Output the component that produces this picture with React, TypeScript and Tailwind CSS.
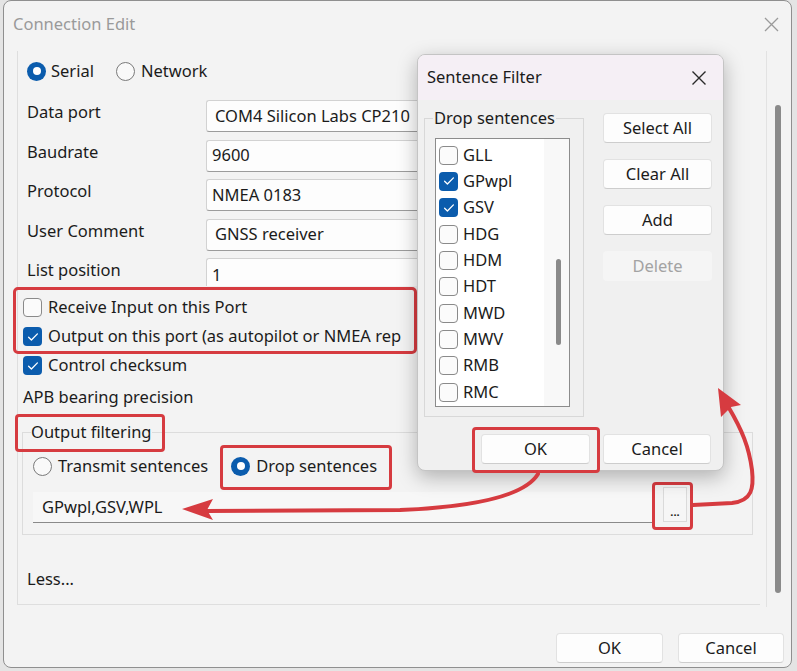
import React from "react";

const font = "font-['Noto_Sans',sans-serif]";

function Check({ on }: { on?: boolean }) {
  if (on) {
    return (
      <span className="flex h-[19px] w-[19px] shrink-0 items-center justify-center rounded-[4px] bg-[#0b5cad]">
        <svg width="12" height="10" viewBox="0 0 12 10">
          <path d="M1.6 5.3 4.4 8 10.4 1.9" fill="none" stroke="white" strokeWidth="1.3" strokeLinecap="round" strokeLinejoin="round" />
        </svg>
      </span>
    );
  }
  return <span className="h-[19px] w-[19px] shrink-0 rounded-[4px] border border-[#8a8a8a] bg-[#fbfbfb]" />;
}

function Radio({ on, className = "" }: { on?: boolean; className?: string }) {
  if (on) {
    return (
      <span className={`flex h-[19px] w-[19px] shrink-0 items-center justify-center rounded-full bg-[#0b5cad] ${className}`}>
        <span className="h-[8px] w-[8px] rounded-full bg-white" />
      </span>
    );
  }
  return <span className={`block h-[19px] w-[19px] shrink-0 rounded-full border border-[#7a7a7a] bg-[#f9f9f9] ${className}`} />;
}

function Btn({ children, disabled, className = "" }: { children: React.ReactNode; disabled?: boolean; className?: string }) {
  return (
    <div
      className={
        "flex h-[30px] items-center justify-center rounded-[4px] text-[16.5px] " +
        (disabled
          ? "bg-[#f5f5f5] text-[#a3a3a3]"
          : "border border-[#e2e2e2] border-b-[#cdcdcd] bg-[#fdfdfd] text-[#1b1b1b]") +
        " " +
        className
      }
    >
      {children}
    </div>
  );
}

const fields = [
  { label: "Data port", value: "COM4 Silicon Labs CP210", pad: "pl-[8px]" },
  { label: "Baudrate", value: "9600", pad: "pl-[5px]" },
  { label: "Protocol", value: "NMEA 0183", pad: "pl-[5px]" },
  { label: "User Comment", value: "GNSS receiver", pad: "pl-[8px]" },
];

const sentences = [
  { name: "GLL", on: false },
  { name: "GPwpl", on: true },
  { name: "GSV", on: true },
  { name: "HDG", on: false },
  { name: "HDM", on: false },
  { name: "HDT", on: false },
  { name: "MWD", on: false },
  { name: "MWV", on: false },
  { name: "RMB", on: false },
  { name: "RMC", on: false },
];

function SentenceFilter() {
  return (
    <div className="absolute left-[417px] top-[54px] flex h-[417px] w-[307px] flex-col overflow-hidden rounded-[8px] border border-[#c4c4c4] bg-[#f0f0f0] shadow-[0_6px_20px_rgba(0,0,0,0.28)]">
      <div className="flex h-[45px] shrink-0 items-center justify-between bg-[#f5eff5] pl-[9px] pr-[16px]">
        <span className="text-[16.5px] text-[#1b1b1b]">Sentence Filter</span>
        <svg width="16" height="16" viewBox="0 0 16 16">
          <path d="M1.5 1.5 14.5 14.5M14.5 1.5 1.5 14.5" stroke="#2a2a2a" strokeWidth="1.4" />
        </svg>
      </div>
      <div className="flex items-start pl-[6px]">
        <fieldset className="mt-[6px] w-[159px] border border-[#d8d8d8] pb-[9px] pl-[10px] pr-[13px]">
          <legend className="ml-[-2px] px-[1px] leading-[24px] text-[16.5px] text-[#1b1b1b]">Drop sentences</legend>
          <div className="mt-[8px] flex h-[269px] w-[135px] border border-[#8c8c8c] bg-white">
            <div className="flex flex-1 flex-col pt-[3px]">
              {sentences.map((s) => (
                <div key={s.name} className="flex h-[26.33px] items-center gap-[5px] pl-[3px]">
                  <Check on={s.on} />
                  <span className="text-[16.5px] text-[#1b1b1b]">{s.name}</span>
                </div>
              ))}
            </div>
            <div className="flex w-[25px] justify-center bg-[#f8f8f8] pl-[3px]">
              <div className="mt-[120px] h-[86px] w-[5px] rounded-full bg-[#8a8a8a]" />
            </div>
          </div>
        </fieldset>
        <div className="ml-[19px] mt-[13px] flex w-[109px] flex-col gap-[16px]">
          <Btn>Select All</Btn>
          <Btn>Clear All</Btn>
          <Btn>Add</Btn>
          <Btn disabled>Delete</Btn>
        </div>
      </div>
      <div className="mt-[17px] flex justify-end gap-[13px] pr-[12px]">
        <Btn className="w-[109px]">OK</Btn>
        <Btn className="w-[108px]">Cancel</Btn>
      </div>
    </div>
  );
}

function Annotations() {
  const red = "#d63b40";
  return (
    <>
      <div className="absolute left-[13px] top-[287px] h-[67px] w-[404px] rounded-[5px] border-[3px] border-[#d63b40]" />
      <div className="absolute left-[15px] top-[414px] h-[38px] w-[150px] rounded-[4px] border-[3px] border-[#d63b40]" />
      <div className="absolute left-[220px] top-[445px] h-[45px] w-[172px] rounded-[4px] border-[3px] border-[#d63b40]" />
      <div className="absolute left-[652px] top-[482px] h-[48px] w-[41px] rounded-[4px] border-[3px] border-[#d63b40]" />
      <SentenceFilter />
      <div className="absolute left-[472px] top-[427px] h-[46px] w-[128px] rounded-[4px] border-[3px] border-[#d63b40]" />
      <svg className="absolute left-0 top-0" width="797" height="671" viewBox="0 0 797 671">
        <path d="M538 474 C524 497 470 507 400 510 L206 511" fill="none" stroke={red} strokeWidth="4" strokeLinecap="round" />
        <polygon points="182,509 213,499 207,510 213,520" fill={red} />
        <path d="M693 505 L732 503 C752 501 754 488 752 470 C749 447 742 430 729 408" fill="none" stroke={red} strokeWidth="4" strokeLinecap="round" />
        <polygon points="718,388 741,405 731,407 721,417" fill={red} />
      </svg>
    </>
  );
}

export default function App() {
  return (
    <div className={`relative h-[671px] w-[797px] overflow-hidden bg-[#e4e4e4] text-[#1b1b1b] ${font}`}>
      <div className="ml-[3px] flex h-[668px] w-[789px] flex-col rounded-[8px] border border-[#8f8f8f] bg-[#f3f3f3]">
        <div className="flex h-[46px] shrink-0 items-center justify-between pl-[9px] pr-[12px]">
          <span className="text-[16.5px] text-[#9a9a9a]">Connection Edit</span>
          <svg width="15" height="15" viewBox="0 0 15 15">
            <path d="M1 1 14 14M14 1 1 14" stroke="#9a9a9a" strokeWidth="1.3" />
          </svg>
        </div>

        <div className="mt-[4px] flex">
          <div className="ml-[13px] flex h-[554px] w-[743px] flex-col border-b border-l border-[#dedede] pl-[5px] text-[16.5px]">
            <div className="mt-[8px] flex h-[24px] items-center pl-[4px]">
              <Radio on />
              <span className="ml-[5px]">Serial</span>
              <Radio className="ml-[22px]" />
              <span className="ml-[6px]">Network</span>
            </div>

            <div className="mt-[17px] flex flex-col">
              {fields.map((f) => (
                <div key={f.label} className="flex h-[39.5px] items-start">
                  <span className="w-[183px] shrink-0 pl-[4px] leading-[24px]">{f.label}</span>
                  <div className={`flex h-[32px] w-[211px] items-center overflow-hidden whitespace-nowrap rounded-l-[3px] border border-r-0 border-[#d2d2d2] border-b-[#9c9c9c] bg-[#fdfdfd] ${f.pad}`}>
                    {f.value}
                  </div>
                </div>
              ))}
              <div className="flex h-[28px] items-start">
                <span className="w-[183px] shrink-0 pl-[4px] leading-[24px]">List position</span>
                <div className="h-[28px] w-[211px] rounded-tl-[3px] border border-b-0 border-r-0 border-[#d2d2d2] bg-[#fdfdfd] pl-[5px] pt-[4px] leading-[24px]">1</div>
              </div>
            </div>

            <div className="mt-[7px] flex w-[391px] flex-col overflow-hidden">
              <div className="flex h-[29px] items-center gap-[6px] whitespace-nowrap">
                <Check />
                <span>Receive Input on this Port</span>
              </div>
              <div className="flex h-[29px] items-center gap-[6px] whitespace-nowrap">
                <Check on />
                <span>Output on this port (as autopilot or NMEA rep</span>
              </div>
              <div className="flex h-[29px] items-center gap-[6px] whitespace-nowrap">
                <Check on />
                <span>Control checksum</span>
              </div>
            </div>

            <div className="mt-[5px] h-[24px] leading-[24px]">APB bearing precision</div>

            <fieldset className="mt-[11px] ml-[-1px] w-[731px] border border-[#dcdcdc] pb-[11px] pl-[10px]">
              <legend className="ml-[-2px] px-[0px] leading-[24px]">Output filtering</legend>
              <div className="mt-[10px] flex h-[24px] items-center">
                <Radio />
                <span className="ml-[6px]">Transmit sentences</span>
                <Radio on className="ml-[23px]" />
                <span className="ml-[6px]">Drop sentences</span>
              </div>
              <div className="mt-[9px] flex items-end">
                <div className="flex h-[31px] w-[619px] items-center border-b border-[#8a8a8a] bg-[#f7f7f7] pl-[9px]">
                  GPwpl,GSV,WPL
                </div>
                <div className="mb-[1px] ml-[11px] flex h-[35px] w-[24px] items-end justify-center border border-[#dadada] bg-[#f6f6f6] pb-[4px] text-[11px] font-bold leading-none">
                  ...
                </div>
              </div>
            </fieldset>

            <div className="mt-[32px] h-[24px] pl-[4px] leading-[24px]">Less...</div>
          </div>
          <div className="ml-[6px] h-[556px] border-l border-[#e2e2e2] pl-[8px]">
            <div className="mt-[54px] h-[488px] w-[6px] rounded-full bg-[#8a8a8a]" />
          </div>
        </div>

        <div className="mt-[26px] flex justify-end gap-[15px] pr-[7px]">
          <Btn className="w-[107px]">OK</Btn>
          <Btn className="w-[106px]">Cancel</Btn>
        </div>
      </div>
      <Annotations />
    </div>
  );
}
